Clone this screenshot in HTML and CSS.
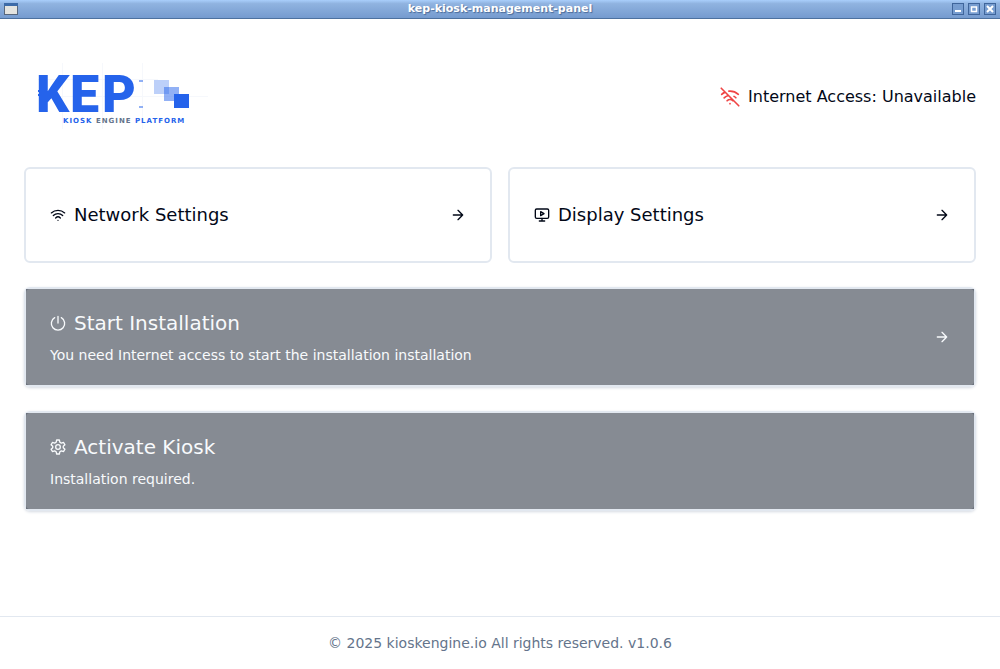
FILE: index.html
```html
<!DOCTYPE html>
<html lang="en">
<head>
<meta charset="utf-8">
<meta name="viewport" content="width=device-width, initial-scale=1">
<title>kep-kiosk-management-panel</title>
<link rel="stylesheet" href="styles.css">
</head>
<body>

<div class="titlebar">
	<svg class="window-icon" viewBox="0 0 14 12" aria-hidden="true">
		<rect x="0.5" y="0.5" width="13" height="11" fill="#e4e4e0" stroke="#58677c"/>
		<rect x="0" y="0" width="14" height="3" fill="#3d6ba8"/>
	</svg>
	<span class="window-title">kep-kiosk-management-panel</span>
	<div class="window-buttons">
		<button type="button" aria-label="Minimize"><svg viewBox="0 0 12 12"><rect x="3" y="7" width="6" height="2" fill="#fff"/></svg></button>
		<button type="button" aria-label="Maximize"><svg viewBox="0 0 12 12"><path d="M3.500 4h5v4.500h-5z" fill="none" stroke="#fff" stroke-width="1.500"/></svg></button>
		<button type="button" aria-label="Close"><svg viewBox="0 0 12 12"><path d="M3 3l6 6m0-6l-6 6" stroke="#fff" stroke-width="2"/></svg></button>
	</div>
</div>

<main>
	<header>
		<svg class="logo" viewBox="0 0 192 72" role="img" aria-label="KEP Kiosk Engine Platform">
			<g stroke="#f6f8fc" stroke-width="1">
				<path d="M14 18.500h120M14 35.500h170M38.500 2v66M78.500 2v66M118.500 2v66"/>
			</g>
			<text class="logo-name" y="51"><tspan x="12">K</tspan><tspan x="46">E</tspan><tspan x="78">P</tspan></text>
			<g fill="#2563eb">
				<rect x="14" y="29" width="3" height="2"/>
				<rect x="14" y="33" width="3" height="2"/>
				<rect x="115" y="19" width="4" height="2" opacity=".5"/>
				<rect x="115" y="45" width="4" height="2" opacity=".5"/>
				<rect x="130" y="19" width="15" height="14" opacity=".3"/>
				<rect x="140" y="26" width="15" height="14" opacity=".5"/>
				<rect x="150" y="33" width="15" height="14"/>
			</g>
			<text class="logo-tagline" x="39" y="62">KIOSK <tspan class="muted">ENGINE</tspan> PLATFORM</text>
		</svg>
		<div class="status">
			<svg class="icon-lg" viewBox="0 0 24 24" aria-hidden="true">
				<path d="M1.500 1.500l21 21M8.500 16.500a5 5 0 0 1 7 0M2 8.820a15 15 0 0 1 4.170-2.650M10.660 5c4.010-.360 8.140.900 11.340 3.760M16.850 11.250a10 10 0 0 1 2.220 1.680M5 13a10 10 0 0 1 5.240-2.760M12 20h.01"/>
			</svg>
			<span>Internet Access: Unavailable</span>
		</div>
	</header>

	<div class="settings">
		<button type="button" class="card">
			<svg class="icon" viewBox="0 0 24 24" aria-hidden="true">
				<path d="M12 20h.01M2 8.820a15 15 0 0 1 20 0M5 12.860a10 10 0 0 1 14 0M8.500 16.430a5 5 0 0 1 7 0"/>
			</svg>
			<span class="label">Network Settings</span>
			<svg class="icon" viewBox="0 0 24 24" aria-hidden="true"><path d="M5 12h14M12 5l7 7-7 7"/></svg>
		</button>
		<button type="button" class="card">
			<svg class="icon" viewBox="0 0 24 24" aria-hidden="true">
				<rect x="2" y="3" width="20" height="14" rx="2"/>
				<path d="M10 7l5 3-5 3zM12 17v4M8 21h8"/>
			</svg>
			<span class="label">Display Settings</span>
			<svg class="icon" viewBox="0 0 24 24" aria-hidden="true"><path d="M5 12h14M12 5l7 7-7 7"/></svg>
		</button>
	</div>

	<button type="button" class="action" disabled>
		<span class="action-text">
			<span class="action-title">
				<svg class="icon" viewBox="0 0 24 24" aria-hidden="true"><path d="M12 2v10M17 4a10 10 0 1 1-10 0"/></svg>
				Start Installation
			</span>
			<span class="action-note">You need Internet access to start the installation installation</span>
		</span>
		<svg class="icon" viewBox="0 0 24 24" aria-hidden="true"><path d="M5 12h14M12 5l7 7-7 7"/></svg>
	</button>

	<button type="button" class="action" disabled>
		<span class="action-text">
			<span class="action-title">
				<svg class="icon" viewBox="0 0 24 24" aria-hidden="true">
					<path d="M10 1.500h4l.8 3.400 2.200 1.300 3.400-1 2 3.500-2.500 2.300v2l2.500 2.300-2 3.500-3.400-1-2.200 1.300-.8 3.400h-4l-.8-3.400-2.200-1.300-3.400 1-2-3.500 2.500-2.300v-2L1.600 8.700l2-3.500 3.400 1 2.200-1.300z"/>
					<circle cx="12" cy="12" r="3.500"/>
				</svg>
				Activate Kiosk
			</span>
			<span class="action-note">Installation required.</span>
		</span>
	</button>
</main>

<footer>© 2025 kioskengine.io All rights reserved. v1.0.6</footer>

</body>
</html>
```
FILE: styles.css
```css
* {
	box-sizing: border-box;
}
body {
	margin: 0;
	min-height: 100vh;
	display: flex;
	flex-direction: column;
	background: #fff;
	color: #020817;
	font-family: "DejaVu Sans", Verdana, sans-serif;
	font-size: 16px;
	line-height: 24px;
}
button {
	font: inherit;
	color: inherit;
	cursor: pointer;
}

/* window frame */
.titlebar {
	display: grid;
	grid-template-columns: 1fr auto 1fr;
	align-items: center;
	height: 19px;
	padding: 0 4px;
	background: linear-gradient(#a9cefb, #90b3e0 20%, #759bcf);
	border-bottom: 1px solid #4d719f;
}
.window-icon {
	width: 14px;
	height: 12px;
}
.window-title {
	color: #fff;
	font-size: 11px;
	font-weight: bold;
	line-height: 16px;
	text-shadow: 1px 1px 1px #4a6a98;
}
.window-buttons {
	display: flex;
	justify-content: flex-end;
	gap: 4px;
}
.window-buttons button {
	width: 12px;
	height: 12px;
	padding: 0;
	border: 0;
	outline: 1px solid #3f659b;
	outline-offset: -1px;
	background: #779dd0;
}
.window-buttons svg {
	display: block;
}

main {
	flex: 1;
	display: flex;
	flex-direction: column;
	gap: 24px;
	padding: 24px;
}
header {
	display: flex;
	align-items: center;
	justify-content: space-between;
	padding: 18px 0 10px;
}
.logo {
	width: 192px;
	height: 72px;
}
.logo-name {
	fill: #2563eb;
	font-family: Roboto, sans-serif;
	font-size: 52px;
	font-weight: 900;
}
.logo-tagline {
	fill: #2563eb;
	font-size: 7px;
	font-weight: bold;
	letter-spacing: 1px;
}
.logo-tagline .muted {
	fill: #64748b;
}
.status {
	display: flex;
	align-items: center;
	gap: 8px;
}

.icon, .icon-lg {
	flex: none;
	width: 16px;
	height: 16px;
	fill: none;
	stroke: currentColor;
	stroke-width: 2;
	stroke-linecap: round;
	stroke-linejoin: round;
}
.icon-lg {
	width: 20px;
	height: 20px;
	color: #ef4444;
}

.settings {
	display: grid;
	grid-template-columns: 1fr 1fr;
	gap: 16px;
}
.card {
	display: flex;
	align-items: center;
	gap: 8px;
	padding: 32px 24px;
	border: 2px solid #e2e8f0;
	border-radius: 6px;
	background: #fff;
	font-size: 18px;
	line-height: 28px;
	text-align: left;
}
.label {
	flex: 1;
}

.action {
	position: relative;
	isolation: isolate;
	display: flex;
	align-items: center;
	padding: 20px 24px;
	border: 2px solid #e2e8f0;
	border-radius: 6px;
	background: none;
	box-shadow: 0 1px 3px #d5dae2;
	color: #f8fafc;
	text-align: left;
	cursor: default;
}
/* square overlay under the rounded face, its corners stay visible */
.action::before, .action::after {
	content: "";
	position: absolute;
	inset: 0;
	z-index: -1;
	background: #6b727d;
}
.action::after {
	border-radius: 4px;
	background: #868b93;
}
.action-text {
	flex: 1;
	display: grid;
	gap: 8px;
}
.action-title {
	display: flex;
	align-items: center;
	gap: 8px;
	font-size: 20px;
	line-height: 28px;
}
.action-note {
	font-size: 14px;
	line-height: 20px;
}

footer {
	padding: 16px;
	border-top: 1px solid #e2e8f0;
	color: #64748b;
	font-size: 14px;
	line-height: 20px;
	text-align: center;
}
```
